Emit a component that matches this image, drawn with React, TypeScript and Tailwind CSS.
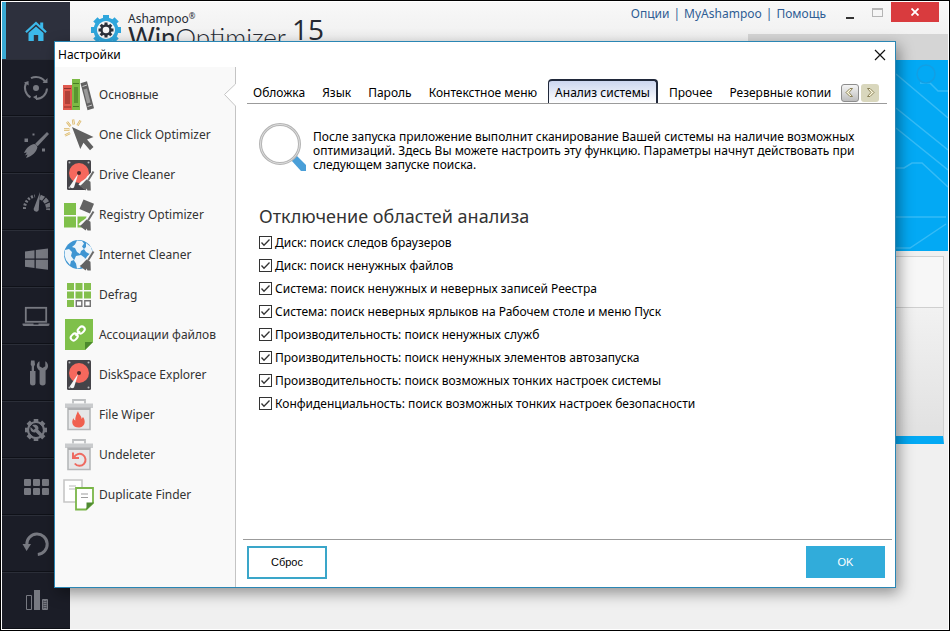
import { ReactNode } from "react";

const gearTeeth = [0, 45, 90, 135, 180, 225, 270, 315];

const railIcons: { name: string; icon: ReactNode }[] = [
  {
    name: "Home",
    icon: (
      <g fill="#3cb9ea">
        <path d="M14 4.5 3.2 14.4l1.5 1.5L14 7.6l9.3 8.3 1.5-1.5-3.6-3.3V5.6h-3v2.8z" />
        <path d="M14 9.4 6.5 16v8h5.3v-6h4.4v6h5.3v-8z" />
      </g>
    ),
  },
  {
    name: "Auto",
    icon: (
      <g fill="none" stroke="#777981" strokeWidth="2">
        <circle cx="14" cy="14" r="3" fill="#777981" stroke="none" />
        <path d="M9 4.2A11 11 0 0 1 23.6 8.4M25 14.5A11 11 0 0 1 14 25M8.5 23.4A11 11 0 0 1 4.2 8.8" />
        <path d="M25.5 4v5h-5zM11 23l4-2v5zM2 8.5l4.500-1.500.2 4.500z" fill="#777981" stroke="none" />
      </g>
    ),
  },
  {
    name: "Clean",
    icon: (
      <g fill="#777981">
        <path d="M25 1 27 3 15.6 15.2l-2.4-2.4z" />
        <path d="M12 13c1.9.2 3.2 1.6 3.4 3.4-1 4.2-5 8.6-11.4 10.6l1.6-3.4-2.6 1 1.8-3-2.8.4c1.8-4 5.2-8.2 10-9z" />
        <path d="M2.500 7.500h3.500v3.500h-3.500zM10.500 2.500h2v2h-2zM20 17.500h3v3h-3z" />
      </g>
    ),
  },
  {
    name: "Optimize",
    icon: (
      <g fill="none" stroke="#777981">
        <path d="M2.500 21A12.500 12.500 0 0 1 13 8" strokeWidth="3" strokeDasharray="2 1.500" />
        <path d="M18 9a12.500 12.500 0 0 1 8.500 13" strokeWidth="5" strokeDasharray="4 1" />
        <path d="M18 4 16.800 20.500a2.600 2.600 0 1 1-4.600-1z" fill="#777981" stroke="none" />
      </g>
    ),
  },
  {
    name: "Windows",
    icon: <path fill="#777981" d="M3 6.500 12.500 5.200v8.300H3zM13.800 5 26 3.400v10.100H13.800zM3 14.700h9.500V23L3 21.700zM13.800 14.700H26v10.100L13.800 23.200z" />,
  },
  {
    name: "Hardware",
    icon: (
      <g fill="none" stroke="#777981">
        <rect x="3.800" y="5.800" width="20.400" height="14" strokeWidth="1.800" />
        <path d="M.5 21.500h11v1h5v-1h11v1q0 1.500-2 1.500h-23q-2 0-2-1.500z" fill="#777981" stroke="none" />
      </g>
    ),
  },
  {
    name: "Tools",
    icon: (
      <g fill="#777981">
        <path d="M9 1.500h3.500l.5 4-1 2v4.500h1.500V24q0 2.500-2.700 2.500T8 24V12h1.700V7.500l-1-2z" />
        <path d="M17.500 2.200v5l3 1.800 2.800-1.800v-5c3.500 2 3.800 6.800.3 9.400v12.200q0 2.700-3 2.700t-3-2.700V11.600c-3.700-2.600-3.600-7.400-.1-9.400z" />
      </g>
    ),
  },
  {
    name: "Maintenance",
    icon: (
      <g stroke="#777981">
        {gearTeeth.map((a) => (
          <path key={a} d="M14 3v4" strokeWidth="4.600" transform={`rotate(${a} 14 14)`} />
        ))}
        <circle cx="14" cy="14" r="8" fill="none" strokeWidth="2.200" />
        <path d="M14.500 14.500 20 20" strokeWidth="3.400" />
        <path d="M10.200 9.200l3.200 3-1.800 1.900-3-3.100c-.9 3.400 1.400 6 4.600 5.400l3.200-3.200c.7-3.200-2.400-5.600-6.200-4z" fill="#777981" stroke="none" />
      </g>
    ),
  },
  {
    name: "Modules",
    icon: (
      <g fill="#777981">
        {[2, 11, 20].map((x) => (
          <g key={x}>
            <rect x={x} y="6" width="7" height="7" rx="1" />
            <rect x={x} y="15" width="7" height="7" rx="1" />
          </g>
        ))}
      </g>
    ),
  },
  {
    name: "Restore",
    icon: (
      <g>
        <path d="M4.800 14.500a10.200 10.200 0 1 1 11 9.900" fill="none" stroke="#777981" strokeWidth="3" />
        <path d="M.5 14h8.500L4.600 21z" fill="#777981" />
      </g>
    ),
  },
  {
    name: "Statistics",
    icon: (
      <g>
        <path d="M4.500 8.500h5v14h-5z" fill="none" stroke="#777981" />
        <path d="M12 3h6v20h-6z" fill="#777981" />
        <path d="M20.500 12.500h5v10h-5z" fill="#4b4d56" stroke="#777981" />
        <path d="M23 13v10" stroke="#777981" strokeDasharray="1 1" strokeWidth="3" />
      </g>
    ),
  },
];

function SmallBroom() {
  return (
    <g>
      <path d="M30.500 11 24 17.500c-1 3-6 4-8.500 8l9 6.500h6z" fill="#fafafa" />
      <path d="M30.500 12.500 25 21.500" stroke="#6b6b6b" strokeWidth="2" />
      <path d="M23.500 20.500l4 2.200.3 8.800h-3.300l-1-2-.8 2-6-4.500c2.500-1.500 4-3.500 6.800-6.500z" fill="#636363" />
    </g>
  );
}

function Drive() {
  return (
    <g>
      <rect x="4" y="1" width="24" height="30" rx="1.500" fill="#454449" />
      <g fill="#b9b9bb">
        <circle cx="6.500" cy="3.500" r="1" />
        <circle cx="25.500" cy="3.500" r="1" />
        <circle cx="6.500" cy="28.500" r="1" />
        <circle cx="25.500" cy="28.500" r="1" />
      </g>
      <circle cx="16" cy="14" r="10" fill="#f6685d" />
      <path d="M15.300 14.500 11 28.500q-2.800 2-4.200-1.200z" fill="#f5f5f5" />
      <circle cx="16" cy="14" r="2" fill="#4a2a2c" />
    </g>
  );
}

function Bin() {
  return (
    <g>
      <path d="M10 4.500V1h12v3.500" fill="none" stroke="#bdbfc1" strokeWidth="1.800" />
      <path d="M2 9V4.500h28V9z" fill="#c9cbcd" />
      <path d="M5 9h22v21.500H5z" fill="#e6e7e8" stroke="#b6b8ba" strokeWidth="1.600" />
      <path d="M5 9h22v2H5z" fill="#aeb0b2" />
    </g>
  );
}

const modules: { label: string; icon: ReactNode }[] = [
  {
    label: "Основные",
    icon: (
      <g>
        <path d="M0 6h9v25H0z" fill="#e05a4f" />
        <path d="M2 12h5v13H2z" fill="#b04038" />
        <path d="M1 9.500h7M1 28h7" stroke="#8c332d" />
        <path d="M9 0h8v31H9z" fill="#7cba45" />
        <path d="M11 8h4v16h-4z" fill="#5a9530" />
        <path d="M10 4.500h6M10 27.500h6" stroke="#477d24" />
        <path d="M17.500 4.200l6.500-2 7 27-6.500 2z" fill="#626262" />
        <path d="M20.500 10.500l3.500-1 3.500 14-3.500 1z" fill="#9a9a9a" />
        <path d="M19.500 7.500l4.500-1.500M24.500 27.500l4.500-1.500" stroke="#c5c5c5" />
      </g>
    ),
  },
  {
    label: "One Click Optimizer",
    icon: (
      <g>
        <path d="M9 8 30.500 18 24 20.500l6.500 7.500-3.500 3.200-6.500-7.400-3.200 6.200z" fill="#606060" />
        <path d="M10 .5l.8 5M17.500 1.500l-3 5M4 3l3.500 4.200M1 10.500h5.500M2 16.500l5-2.500" fill="none" stroke="#d7b468" strokeWidth="2.400" />
        <path d="M10 .5l.8 5M17.500 1.500l-3 5M4 3l3.500 4.200M1 10.500h5.500M2 16.500l5-2.500" fill="none" stroke="#fff6dc" strokeWidth=".8" />
      </g>
    ),
  },
  {
    label: "Drive Cleaner",
    icon: (
      <g>
        <Drive />
        <SmallBroom />
      </g>
    ),
  },
  {
    label: "Registry Optimizer",
    icon: (
      <g>
        <path d="M1 4h12v12H1zM1 17.500h12v11H1zM14.500 17.500h9v11h-9z" fill="#7fc04a" />
        <SmallBroom />
        <path d="M20.500.5 31 4.800l-4 9.700L16.500 10z" fill="#636363" />
      </g>
    ),
  },
  {
    label: "Internet Cleaner",
    icon: (
      <g>
        <circle cx="15.500" cy="15.500" r="14.500" fill="#3e95d2" />
        <path
          d="M14 1.500l5 .5 2 2.500-2 3 2 2.500-3 2-1 3-3-2-2-4-3-1 3-2.500zM23 4l5 4 1.500 5-3 2-3.500-2-2-3 2-2zM2 11l4-1 3 3-1 4 3 4-3 1-1 4-4-5-1.500-5zM13 17l5-1 4 3-1 5-4 5-3 .5-1-5-2-3z"
          fill="#eef5fa"
        />
        <SmallBroom />
      </g>
    ),
  },
  {
    label: "Defrag",
    icon: (
      <g>
        <path d="M4 4h7v7H4zM12.500 4h7v7h-7zM21 4h7v7h-7zM4 12.500h7v7H4zM12.500 12.500h7v7h-7zM21 12.500h7v7h-7zM4 21h7v7H4z" fill="#84bf4d" />
        <path d="M13.300 21.800h5.500v5.500h-5.500zM21.800 21.800h5.500v5.500h-5.500z" fill="#fff" stroke="#737373" strokeWidth="1.400" />
      </g>
    ),
  },
  {
    label: "Ассоциации файлов",
    icon: (
      <g>
        <path d="M2 0h28v23l-8 8H2z" fill="#7fc04a" />
        <path d="M30 23h-8v8z" fill="#4c8a2c" />
        <g fill="none" stroke="#fff" strokeWidth="2">
          <rect x="7.500" y="15.200" width="7.500" height="5.600" rx="2.800" transform="rotate(-45 11.200 18)" />
          <rect x="14.500" y="8.200" width="7.500" height="5.600" rx="2.800" transform="rotate(-45 18.200 11)" />
          <path d="M12.500 16.700 17 12.200" />
        </g>
      </g>
    ),
  },
  { label: "DiskSpace Explorer", icon: <Drive /> },
  {
    label: "File Wiper",
    icon: (
      <g>
        <Bin />
        <path d="M15 12c.6 3.500 4 5 3.500 8l1.500-2c2.500 3 3 9.500-3.500 10.500-6.500.5-9-4.500-6-9.500.3 1.500.8 2 1.800 2.500-.5-3 1.500-6.500 2.700-9.500z" fill="#f0604f" />
      </g>
    ),
  },
  {
    label: "Undeleter",
    icon: (
      <g>
        <Bin />
        <path d="M11 18.500a6 6 0 1 1 .8 6" fill="none" stroke="#ee6a60" strokeWidth="2" />
        <path d="M10 13.500v5.500h6" fill="none" stroke="#ee6a60" strokeWidth="2" />
      </g>
    ),
  },
  {
    label: "Duplicate Finder",
    icon: (
      <g>
        <path d="M1 1h18v22H1z" fill="#fff" stroke="#c6c6c6" strokeWidth="1.600" />
        <path d="M6 7h7M6 10h6" stroke="#b9b9b9" />
        <path d="M13 9h17v15l-7 6.500H13z" fill="#fff" stroke="#7ab648" strokeWidth="1.800" />
        <path d="M31 23.500h-7.500V31z" fill="#4f8a31" />
        <path d="M18 15h7M18 18.500h7" stroke="#9d9d9d" />
      </g>
    ),
  },
];

const tabs = ["Обложка", "Язык", "Пароль", "Контекстное меню", "Анализ системы", "Прочее", "Резервные копии"];

const areas = [
  "Диск: поиск следов браузеров",
  "Диск: поиск ненужных файлов",
  "Система: поиск ненужных и неверных записей Реестра",
  "Система: поиск неверных ярлыков на Рабочем столе и меню Пуск",
  "Производительность: поиск ненужных служб",
  "Производительность: поиск ненужных элементов автозапуска",
  "Производительность: поиск возможных тонких настроек системы",
  "Конфиденциальность: поиск возможных тонких настроек безопасности",
];

function Rail() {
  return (
    <nav className="w-[68px] shrink-0 bg-[#1b1d27]">
      {railIcons.map(({ name, icon }, i) => (
        <button
          key={name}
          aria-label={name}
          className={
            i === 0
              ? "flex h-[57px] w-full items-center justify-center border-l-4 border-[#39a9d3] bg-[#2d303d] pr-1"
              : "flex h-[57px] w-full items-center justify-center border-t border-b border-t-[#2b2e38] border-b-[#0f1118]"
          }
        >
          <svg width="28" height="28" viewBox="0 0 28 28">
            {icon}
          </svg>
        </button>
      ))}
    </nav>
  );
}

function Logo() {
  return (
    <div className="flex gap-1.5 pt-2 pl-5 text-[#262a33]">
      <svg width="32" height="32" viewBox="0 0 32 32" className="mt-1">
        <g stroke="#2fa6dc" fill="none">
          {gearTeeth.map((a) => (
            <path key={a} d="M16 1v5" strokeWidth="6" transform={`rotate(${a} 16 16)`} />
          ))}
          <circle cx="16" cy="16" r="10.500" strokeWidth="4" />
        </g>
        <circle cx="16" cy="16" r="9" fill="#f6f6f6" />
        <g stroke="#2b303a" fill="none">
          {gearTeeth.map((a) => (
            <path key={a} d="M16 8.500v3" strokeWidth="3" transform={`rotate(${a} 16 16)`} />
          ))}
          <circle cx="16" cy="16" r="4.500" strokeWidth="2.400" />
        </g>
      </svg>
      <div>
        <p className="flex text-xs leading-[18px]">
          Ashampoo<span className="text-[8px] leading-[12px]">®</span>
        </p>
        <p className="font-[Lato,sans-serif] text-[26px] leading-[18px] font-light whitespace-nowrap">
          <span className="font-normal">Win</span>Optimizer
        </p>
      </div>
      <p className="font-['Open_Sans',sans-serif] text-[28px] leading-[38px]">15</p>
    </div>
  );
}

function AppHeader() {
  return (
    <header className="flex h-[58px] justify-between bg-gradient-to-b from-[#f8f8f8] to-[#ececec]">
      <Logo />
      <div className="flex flex-col items-end">
        <div className="flex items-center pr-[9px]">
          <div className="flex items-center gap-1 pt-1 text-[#2f5d94]">
            <a href="#options">Опции</a>
            <span>|</span>
            <a href="#account">MyAshampoo</a>
            <span>|</span>
            <a href="#help">Помощь</a>
          </div>
          <button aria-label="Свернуть" className="ml-5 h-5 w-2 pt-3">
            <span className="block h-[2px] bg-[#333]" />
          </button>
          <button aria-label="Развернуть" className="mr-2 ml-[18px] h-[9px] w-[11px] border border-t-2 border-[#b5b5b5]" />
          <button aria-label="Закрыть" className="flex h-5 w-12 items-center justify-center bg-[#d93b3e]">
            <svg width="8" height="8" viewBox="0 0 8 8">
              <path d="M.5.5l7 7M7.500.5l-7 7" stroke="#fff" strokeWidth="1.800" />
            </svg>
          </button>
        </div>
        <div className="mt-3 h-[26px] w-[200px] bg-[#d5d5d5]" />
      </div>
    </header>
  );
}

function Backdrop() {
  return (
    <main className="flex-1">
      <div className="flex h-[191px] justify-end bg-[#03a9f4]">
        <svg width="60" height="191" viewBox="0 0 60 191" fill="none" stroke="#35bbf6" strokeWidth="1.500">
          <path d="M8 14l52 44M8 48l52 42M8 68l52 42M8 108h8l8-5h10l26 24M8 157h50M8 188h14l36-24M32 23h10l8 8h10" />
          <circle cx="38" cy="14" r="9" stroke="#129fe4" />
        </svg>
      </div>
      <section className="mt-[5px] mr-1 h-[188px] border-t border-r border-b-8 border-[#d0d0d0] border-b-[#03a9f4] bg-gradient-to-b from-[#f8f8f8] to-[#e1e1e1]">
        <div className="h-[51px] border-b border-[#cfcfcf] bg-[#f7f7f7]" />
      </section>
    </main>
  );
}

function ModuleList() {
  return (
    <aside className="flex w-[180px] shrink-0 bg-[#f9f9f9] pb-[72px]">
      <ul className="flex-1 pt-2 pl-2">
        {modules.map(({ label, icon }) => (
          <li key={label}>
            <button className="flex h-10 w-full items-center gap-1 text-left whitespace-nowrap text-[#333]">
              <svg width="32" height="32" viewBox="0 0 32 32" className="shrink-0">
                {icon}
              </svg>
              {label}
            </button>
          </li>
        ))}
      </ul>
    </aside>
  );
}

function Tabs() {
  return (
    <div className="mr-2 ml-3 flex items-end border-b border-[#9b9b9b]">
      <div role="tablist" className="flex items-end gap-[5px]">
        {tabs.map((tab) => (
          <button
            key={tab}
            role="tab"
            aria-selected={tab === "Анализ системы"}
            className={
              tab === "Анализ системы"
                ? "h-6 rounded-t border border-t-2 border-r-2 border-b-0 border-[#20283a] bg-gradient-to-b from-[#ccd6ef] to-white px-[6px] pt-0.5 whitespace-nowrap text-black"
                : "h-[22px] px-[6px] pt-0.5 whitespace-nowrap text-black"
            }
          >
            {tab}
          </button>
        ))}
      </div>
      <div className="ml-auto flex gap-0.5 pr-2 pb-px">
        <button aria-label="Назад" className="flex size-[18px] items-center justify-center rounded-[3px] border border-[#8d8d8d] bg-gradient-to-b from-[#f5f5f5] to-[#bdbdbd]">
          <svg width="12" height="12" viewBox="0 0 12 12" fill="#fffbe0" stroke="#8a8159">
            <path d="M6 1.500h2.500L5 5.500l3.500 4H6l-4-4z" />
          </svg>
        </button>
        <button aria-label="Вперёд" className="flex size-[18px] items-center justify-center rounded-[3px] bg-[#d9d7bd]">
          <svg width="12" height="12" viewBox="0 0 12 12" fill="#fffbe0" stroke="#8a8159">
            <path d="M6 1.500H3.500l3.500 4-3.500 4H6l4-4z" />
          </svg>
        </button>
      </div>
    </div>
  );
}

function SettingsDialog() {
  return (
    <div
      role="dialog"
      aria-label="Настройки"
      className="absolute top-10 right-[53px] left-[53px] border border-[#2a86b4] bg-white shadow-[3px_5px_14px_rgba(0,0,0,0.4)]"
    >
      <div className="flex h-[25px] items-center justify-between pr-[9px] pl-[3px] text-black">
        <h1>Настройки</h1>
        <button aria-label="Закрыть настройки">
          <svg width="12" height="12" viewBox="0 0 12 12" stroke="#111" strokeWidth="1.200">
            <path d="M1 1l10 10M11 1 1 11" />
          </svg>
        </button>
      </div>
      <div className="flex">
        <ModuleList />
        {/* divider with the notch pointing at the selected module */}
        <div className="relative w-0">
          <div className="absolute inset-y-0 left-0 border-l border-[#c4c4c4]" />
          <svg width="13" height="28" viewBox="0 0 13 28" className="absolute top-[14px] -left-[12px]">
            <path d="M13 0v28h-1v-3L1 13.500 12 3V0z" fill="#fff" />
            <path d="M12.500 0v3L1.500 13.500 12.500 25v3" fill="none" stroke="#c4c4c4" />
          </svg>
        </div>
        <div className="flex min-w-0 flex-1 flex-col pt-3">
          <Tabs />
          <div className="flex-1 pl-6">
            <div className="flex gap-1.5 pt-[18px]">
              <svg width="48" height="50" viewBox="0 0 48 50" className="shrink-0">
                <path d="M32 38l5-5 10 10v6h-5z" fill="#4a9fd8" />
                <circle cx="21" cy="22" r="19.500" fill="#fff" stroke="#b4b4b4" strokeWidth="3" />
                <circle cx="21" cy="22" r="19.500" fill="none" stroke="#dedede" />
              </svg>
              <p className="pt-2 leading-[14px] text-black">
                После запуска приложение выполнит сканирование Вашей системы на наличие возможных
                <br />
                оптимизаций. Здесь Вы можете настроить эту функцию. Параметры начнут действовать при
                <br />
                следующем запуске поиска.
              </p>
            </div>
            <h2 className="pt-8 text-lg leading-[24px] text-[#333]">Отключение областей анализа</h2>
            <ul className="pt-[3px]">
              {areas.map((area) => (
                <li key={area}>
                  <label className="flex h-[23px] items-center gap-[3px] text-black">
                    <span className="relative flex">
                      <input type="checkbox" defaultChecked className="peer size-[13px] appearance-none border border-[#333] bg-white" />
                      <svg viewBox="0 0 13 13" className="pointer-events-none absolute inset-0 hidden peer-checked:block" fill="none" stroke="#333" strokeWidth="1.300">
                        <path d="M2.500 6.500 5 9.300l5.500-5.800" />
                      </svg>
                    </span>
                    {area}
                  </label>
                </li>
              ))}
            </ul>
          </div>
          <div className="mr-[3px] ml-2 flex justify-between border-t border-[#9b9b9b] pt-1.5 pr-[7px] pb-2 pl-1 font-['Liberation_Sans',sans-serif] text-[11px]">
            <button className="h-[33px] w-20 border-2 border-[#3aa6c9] bg-white text-black">Сброс</button>
            <button className="h-8 w-[79px] bg-[#31acda] text-white">OK</button>
          </div>
        </div>
      </div>
    </div>
  );
}

export default function App() {
  return (
    <div className="relative flex min-h-screen border border-black bg-white p-px font-['Noto_Sans',sans-serif] text-xs">
      <Rail />
      <div className="flex min-w-0 flex-1 flex-col bg-[#f0f0f0]">
        <AppHeader />
        <Backdrop />
      </div>
      <SettingsDialog />
    </div>
  );
}
